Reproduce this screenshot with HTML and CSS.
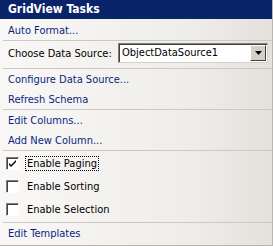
FILE: index.html
```html
<!DOCTYPE html>
<html lang="en">
<head>
    <meta charset="UTF-8">
    <title>GridView Tasks</title>
    <link rel="stylesheet" href="styles.css">
</head>
<body>
    <div class="panel">
        <div class="header">GridView Tasks</div>

        <div class="section first">
            <a class="task" href="#">Auto Format...</a>
        </div>

        <div class="section source">
            <span class="label">Choose Data Source:</span>
            <div class="select">
                <span class="value">ObjectDataSource1</span>
                <span class="arrow"><svg width="7" height="4" viewBox="0 0 7 4"><path d="M0 0H7L3.5 4Z" fill="#000"/></svg></span>
            </div>
        </div>

        <div class="section">
            <a class="task" href="#">Configure Data Source...</a>
            <a class="task" href="#">Refresh Schema</a>
        </div>

        <div class="section">
            <a class="task" href="#">Edit Columns...</a>
            <a class="task" href="#">Add New Column...</a>
        </div>

        <div class="section checks">
            <label class="check"><span class="box checked"><svg width="9" height="9" viewBox="0 0 9 9"><path d="M1 4L3 6L8 1V3L3 8L1 6Z" fill="#000"/></svg></span><span class="text focus">Enable Paging</span></label>
            <label class="check"><span class="box"></span><span class="text">Enable Sorting</span></label>
            <label class="check"><span class="box"></span><span class="text">Enable Selection</span></label>
        </div>

        <div class="section last">
            <a class="task" href="#">Edit Templates</a>
        </div>
    </div>
</body>
</html>
```

FILE: styles.css
```css
body {
    margin: 0;
    font-family: "DejaVu Sans Condensed", "DejaVu Sans", sans-serif;
    font-size: 11px;
    background: #fff;
}
.panel {
    width: 272px;
    height: 245px;
    border-right: 1px solid #b8b4ae;
    border-bottom: 1px solid #b8b4ae;
    background: linear-gradient(to right, #f9f8f6, #efedea 70%, #e4e0dc);
    display: flex;
    flex-direction: column;
}
.header {
    height: 19px;
    line-height: 19px;
    padding-left: 8px;
    background: #0a246a;
    color: #fff;
    font-weight: bold;
    font-size: 12px;
}
.section {
    display: flex;
    flex-direction: column;
    margin-left: 3px;
    border-bottom: 1px solid #ccc8c3;
    padding: 0 0 0 5px;
}
.section.first {
    padding-top: 1px;
}
.section.last {
    border-bottom: none;
}
.task {
    color: #0a1f80;
    text-decoration: none;
    height: 19px;
    padding-top: 1px;
    line-height: 20px;
}
.source {
    flex-direction: row;
    align-items: center;
    height: 21px;
    padding-top: 1px;
    padding-bottom: 5px;
}
.label {
    width: 110px;
    padding-top: 1px;
}
.select {
    width: 150px;
    height: 20px;
    box-sizing: border-box;
    border: 1px solid;
    border-color: #808080 #d4d0c8 #d4d0c8 #808080;
    background: #fff;
    display: flex;
    align-items: center;
    box-shadow: inset 1px 1px 0 #404040;
}
.value {
    flex: 1;
    padding-left: 3px;
}
.arrow {
    width: 16px;
    height: 16px;
    margin-right: 1px;
    background: #d4d0c8;
    border: 1px solid;
    border-color: #fff #404040 #404040 #fff;
    box-sizing: border-box;
    display: flex;
    align-items: center;
    justify-content: center;
}
.checks {
    padding: 1px 0 1px 3px;
}
.check {
    display: flex;
    align-items: center;
    gap: 7px;
    height: 23px;
}
.box {
    width: 13px;
    height: 13px;
    box-sizing: border-box;
    border: 1px solid;
    border-color: #808080 #fff #fff #808080;
    background: #fff;
    display: flex;
    align-items: center;
    justify-content: center;
    box-shadow: inset 1px 1px 0 #404040;
}
.text {
    padding: 0 1px;
}
.focus {
    outline: 1px dotted #000;
}
```
